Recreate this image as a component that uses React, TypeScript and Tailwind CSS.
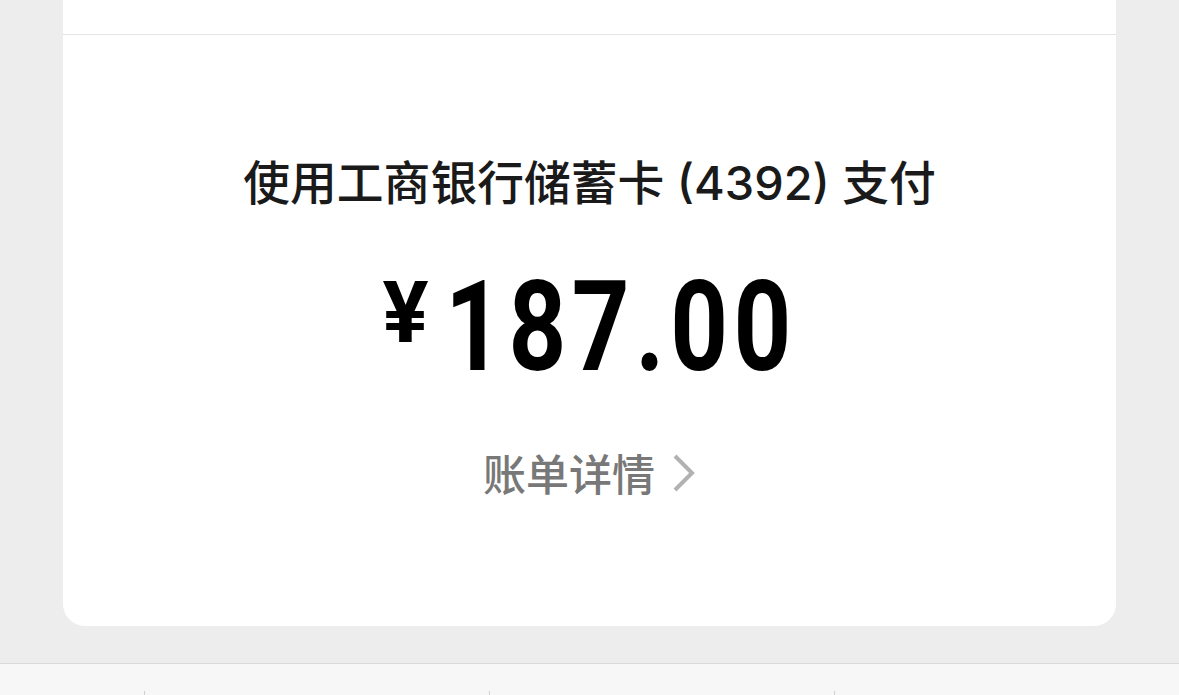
import React from "react";

export default function App() {
  return (
    <div className="w-[1179px] h-[695px] bg-[#ededed] flex flex-col overflow-hidden">
      <div className="mx-[63px] w-[1053px] h-[626px] bg-white rounded-b-[22px] flex flex-col">
        <div className="h-[34px]" />
        <div className="h-px bg-[#e5e5e5]" />
        <div className="flex flex-col items-center">
          <div
            className="mt-[116px] h-[64px] leading-[64px] text-[46.8px] font-medium text-[#1a1a1a] whitespace-nowrap"
            style={{ fontFamily: '"Inter", "Noto Sans CJK SC", sans-serif' }}
          >
            使用工商银行储蓄卡 (4392) 支付
          </div>
          <div
            className="mt-[49px] flex items-start text-black"
            style={{ fontFamily: '"Roboto", sans-serif' }}
          >
            <span className="text-[86px] leading-none font-bold mr-[16px] mt-[6px]">¥</span>
            <div className="w-[352px] h-[127px]">
              <span className="inline-block origin-left scale-x-[0.8] text-[126px] leading-none font-bold tracking-[7px] whitespace-nowrap">
                187.00
              </span>
            </div>
          </div>
          <div className="mt-[51px] flex items-center gap-[17px]">
            <span
              className="text-[43px] leading-[60px] font-medium text-[#787878]"
              style={{ fontFamily: '"Noto Sans CJK SC", sans-serif' }}
            >
              账单详情
            </span>
            <svg width="24" height="40" viewBox="0 0 24 40" fill="none" className="mt-[2px]">
              <path d="M3 3 L20 20 L3 37" stroke="#b2b2b2" strokeWidth="4" strokeLinecap="butt" strokeLinejoin="miter" />
            </svg>
          </div>
        </div>
      </div>
      <div className="mt-[37px] flex-1 bg-[#f7f7f7] border-t border-[#d9d9d9] flex items-end">
        <div className="flex items-end pl-[144px] gap-[344px]">
          <div className="w-px h-[4px] bg-[#cfcfcf]" />
          <div className="w-px h-[4px] bg-[#cfcfcf]" />
          <div className="w-px h-[4px] bg-[#cfcfcf]" />
        </div>
      </div>
    </div>
  );
}
